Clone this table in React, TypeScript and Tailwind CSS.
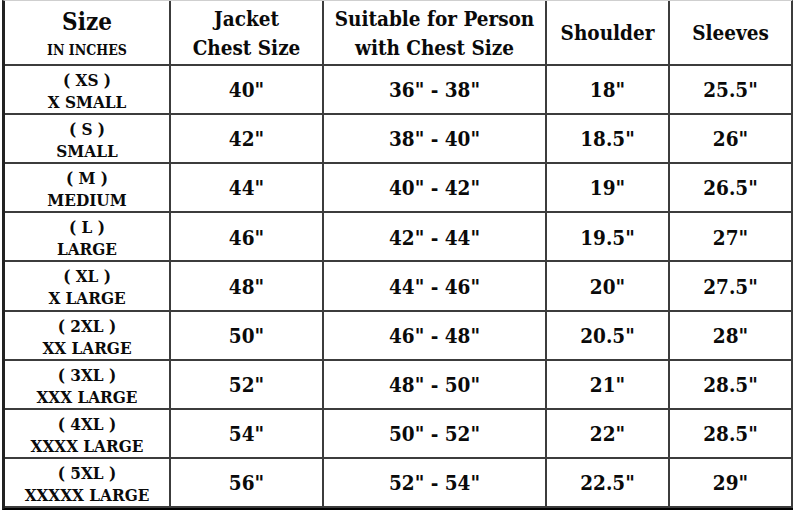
import React from "react";

const rows: [string, string, string, string, string, string][] = [
  ["( XS )", "X SMALL", "40\"", "36\" - 38\"", "18\"", "25.5\""],
  ["( S )", "SMALL", "42\"", "38\" - 40\"", "18.5\"", "26\""],
  ["( M )", "MEDIUM", "44\"", "40\" - 42\"", "19\"", "26.5\""],
  ["( L )", "LARGE", "46\"", "42\" - 44\"", "19.5\"", "27\""],
  ["( XL )", "X LARGE", "48\"", "44\" - 46\"", "20\"", "27.5\""],
  ["( 2XL )", "XX LARGE", "50\"", "46\" - 48\"", "20.5\"", "28\""],
  ["( 3XL )", "XXX LARGE", "52\"", "48\" - 50\"", "21\"", "28.5\""],
  ["( 4XL )", "XXXX LARGE", "54\"", "50\" - 52\"", "22\"", "28.5\""],
  ["( 5XL )", "XXXXX LARGE", "56\"", "52\" - 54\"", "22.5\"", "29\""],
];

const cell = "min-h-0 flex flex-col items-center justify-center text-center border-r-2 border-b-2 border-[#3c3c3c]";

export default function App() {
  return (
    <div
      className="w-[794px] h-[511px] bg-white pl-[2px] text-[#0a0a0a] font-bold"
      style={{ fontFamily: '"DejaVu Serif Condensed", "DejaVu Serif", "Liberation Serif", serif', fontStretch: "condensed" }}
    >
      <div className="w-[791px] h-[510px] grid grid-cols-[166px_153px_223px_123px_123px] grid-rows-[65px_repeat(9,minmax(0,1fr))] border-l-[3px] border-t border-t-[#cfcfcf] border-b-[2px] border-b-black border-l-[#222] border-r border-r-black">
        <div className={cell + " pt-[2px]"}>
          <div className="text-[24px] leading-[28px]">Size</div>
          <div className="text-[14px] leading-[18px] mt-[5px]">IN INCHES</div>
        </div>
        <div className={cell + " text-[20.5px] leading-[29px] pt-[3px]"}>
          <div>Jacket</div>
          <div>Chest Size</div>
        </div>
        <div className={cell + " text-[20.5px] leading-[29px] pt-[3px]"}>
          <div>Suitable for Person</div>
          <div>with Chest Size</div>
        </div>
        <div className={cell + " text-[20.5px] pt-[2px]"}>Shoulder</div>
        <div className={cell + " text-[20.5px] pt-[2px] border-r-0"}>Sleeves</div>
        {rows.map((r, i) => (
          <React.Fragment key={i}>
            <div className={cell + " pt-[3px]" + (i === rows.length - 1 ? " border-b-0" : "")}>
              <div className="text-[17px] leading-[22px]">{r[0]}</div>
              <div className="text-[17px] leading-[22px]">{r[1]}</div>
            </div>
            {r.slice(2).map((v, j) => (
              <div
                key={j}
                className={
                  cell +
                  " text-[20.5px] pt-[2px]" +
                  (j === 3 ? " border-r-0" : "") +
                  (i === rows.length - 1 ? " border-b-0" : "")
                }
              >
                {v}
              </div>
            ))}
          </React.Fragment>
        ))}
      </div>
    </div>
  );
}
